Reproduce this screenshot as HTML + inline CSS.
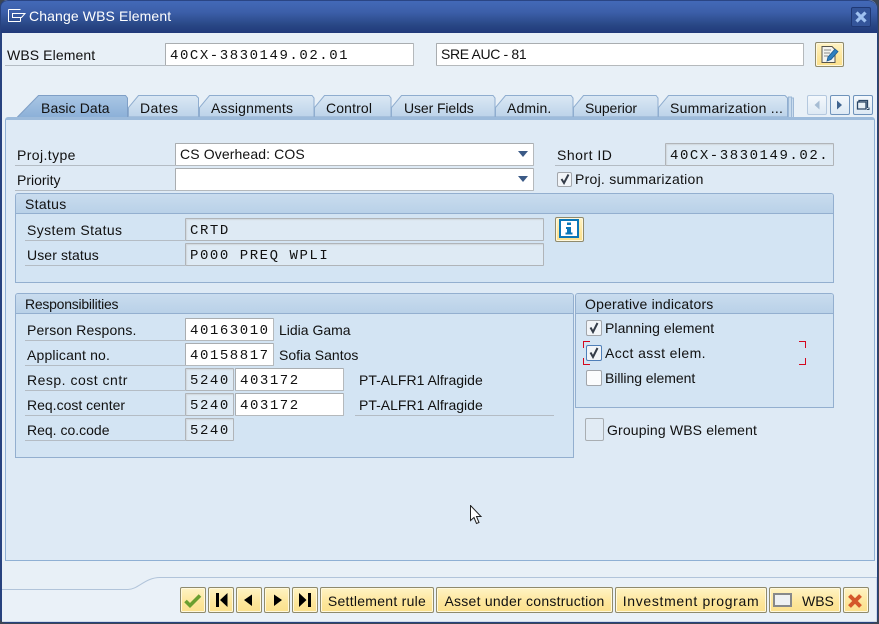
<!DOCTYPE html>
<html><head><meta charset="utf-8">
<style>
html,body{margin:0;padding:0;width:879px;height:624px;overflow:hidden;background:#3c4654}
*{box-sizing:border-box}
body{font-family:"Liberation Sans",sans-serif;font-size:14px;color:#111}
div,span,svg{position:absolute}
#win{left:0;top:0;width:878px;height:623px;background:#e8f0f7;border:1px solid #27427f;border-left-width:2px;border-top:0;border-radius:7px 9px 6px 6px;overflow:hidden}
#tb{left:-2px;top:0;width:880px;height:33px;background:linear-gradient(#4369b8 0,#3c5fa9 35%,#294785 75%,#21397a 100%);border-top:1px solid #2a4584}
.t{white-space:nowrap;line-height:18px;height:18px}
.l{height:23px;border-bottom:1px solid #b4bcc4;white-space:nowrap;line-height:25px;padding-left:2px}
.f{height:23px;background:#fff;border:1px solid #b5b9bc;border-top-color:#a9adb0;border-left-color:#a9adb0;border-radius:1px;white-space:nowrap;line-height:21px;padding-left:4px;color:#111}
.ro{background:#deeaf4;box-shadow:inset 1px 1px 1px #d0d7dd;border-color:#b0b4b8;}
.m{font-family:"Liberation Mono",monospace;font-size:14px;letter-spacing:1.55px;line-height:25px}
.g{background:#d3e4f3;border:1px solid #93afcf;border-radius:3px 3px 0 0}
.gh{left:0;top:0;right:0;height:20px;background:linear-gradient(#c9dcee,#b9d1e8);border-bottom:1px solid #93afcf;border-radius:2px 2px 0 0;line-height:20px;padding-left:9px;white-space:nowrap}
.c{width:16px;height:16px;background:#f2f5f8;border:1px solid #a2a6ab;border-radius:2px}
.b{height:26px;top:587px;background:linear-gradient(#fff3c4,#fde69b 60%,#fbe08c);border:1px solid #8f8a6c;border-radius:2px;box-shadow:inset 0 0 0 1px #fff8dd;line-height:27px;text-align:center;white-space:nowrap;color:#111}
.n{width:20px;height:20px;top:95px;background:linear-gradient(#f4f8fc,#dde9f4);border:1px solid #6f93bb;border-radius:2px}
.r{background:#d4071e}
</style></head><body>
<div id="win" style="">
</div>
<div style="left:0;top:0;width:879px;height:624px">

<div id="tb" style="left:1px;top:0;width:876px;border-radius:7px 9px 0 0"></div>
<svg style="left:8px;top:8px" width="18" height="15" viewBox="0 0 18 15"><path d="M.5 1.500H12.500M.5 1.500V13.500H12.500M12.500 13.500V10M4.500 5.500H17L13.500 9.500H4.500Z" fill="none" stroke="#fff" stroke-width="1"/></svg>
<div class="t" style="left:29px;top:7px;color:#fff;letter-spacing:.12px">Change WBS Element</div>
<div style="left:851px;top:7px;width:20px;height:20px;background:#34559a;border:1px solid #1f3874;border-radius:2px"></div>
<svg style="left:855px;top:11px" width="12" height="12" viewBox="0 0 12 12"><path d="M1.500 1.500L10.500 10.500M10.500 1.500L1.500 10.500" stroke="#9fc1f0" stroke-width="3.200"/></svg>

<div class="l" style="left:5px;top:43px;width:160px;letter-spacing:.1px">WBS Element</div>
<div class="f m" style="left:165px;top:43px;width:249px;">40CX-3830149.02.01</div>
<div class="f" style="left:436px;top:43px;width:368px;letter-spacing:-.35px">SRE AUC - 81</div>
<div class="b" style="left:815px;top:42px;width:29px;height:25px"></div>
<svg style="left:820px;top:45px" width="20" height="19" viewBox="0 0 20 19"><path d="M2 1.500H12L15 4.500V17.500H2Z" fill="#f4f4f0" stroke="#55534c"/><path d="M4 5H11M4 8H10M4 11H8" stroke="#8a8a88"/><path d="M7 16L8 12L15 4L18 6.500L11 14.500Z" fill="#2f80c0" stroke="#1c5a92" stroke-width=".8"/></svg>

<!-- tabs -->
<svg style="left:0;top:90px" width="879" height="32" viewBox="0 0 879 32">
<defs>
<linearGradient id="a" x1="0" y1="0" x2="0" y2="1"><stop offset="0" stop-color="#a9c6e4"/><stop offset="1" stop-color="#8cb0d8"/></linearGradient>
<linearGradient id="i" x1="0" y1="0" x2="0" y2="1"><stop offset="0" stop-color="#dbe8f4"/><stop offset="1" stop-color="#bcd3e9"/></linearGradient>
</defs>
<path d="M788.500 27V7H791.500V27" fill="#c8dbed" stroke="#9db8d6"/>
<path d="M791.500 27V8H793.500V27" fill="#c8dbed" stroke="#9db8d6"/>
<g fill="url(#i)" stroke="#8fadcf">
<path d="M128.500 27V17.500L138.500 5.500H196L198.500 8V27Z"/>
<path d="M199.500 27V17.500L209.500 5.500H312L314 8V27Z"/>
<path d="M314.500 27V17.500L324.500 5.500H389L391 8V27Z"/>
<path d="M391.500 27V17.500L401.500 5.500H493L495 8V27Z"/>
<path d="M495.500 27V17.500L505.500 5.500H571L573 8V27Z"/>
<path d="M573.500 27V17.500L583.500 5.500H656L658 8V27Z"/>
<path d="M658.500 27V17.500L668.500 5.500H785L787.500 8V27Z"/>
</g>
<path d="M17 27.500L38.500 5.500H125.500L127.500 8V27.500Z" fill="url(#a)" stroke="#7f9fc6"/>
</svg>
<div class="t" style="left:41px;top:99px;letter-spacing:.1px">Basic Data</div>
<div class="t" style="left:140px;top:99px;letter-spacing:.35px">Dates</div>
<div class="t" style="left:211px;top:99px;letter-spacing:.18px">Assignments</div>
<div class="t" style="left:326px;top:99px;letter-spacing:.14px">Control</div>
<div class="t" style="left:404px;top:99px;letter-spacing:-.1px">User Fields</div>
<div class="t" style="left:507px;top:99px;letter-spacing:.15px">Admin.</div>
<div class="t" style="left:585px;top:99px;letter-spacing:-.12px">Superior</div>
<div class="t" style="left:670px;top:99px;letter-spacing:.25px">Summarization ...</div>

<div class="n" style="left:807px;border-color:#b4c8de"></div>
<div class="n" style="left:830px"></div>
<div class="n" style="left:853px"></div>
<svg style="left:807px;top:95px" width="66" height="20" viewBox="0 0 66 20"><path d="M12.500 5.500V14.500L7.500 10Z" fill="#a6bcd3"/><path d="M30 5.500V14.500L35 10Z" fill="#40648f"/><path d="M52 7V5.500H60.500V13M52 7H59V14H50.500V7H52" fill="none" stroke="#2a4666" stroke-width="1.300"/><path d="M60 14.500H62V12.500" stroke="#2a4666" fill="none"/></svg>

<!-- main panel -->
<div style="left:5px;top:117px;width:870px;height:444px;background:#deeaf5;border:1px solid #8fb0d4;border-top:3px solid #9dbbdb;border-radius:3px 3px 0 0"></div>

<div class="l" style="left:15px;top:143px;width:160px;letter-spacing:.4px">Proj.type</div>
<div class="f" style="left:175px;top:143px;width:359px;letter-spacing:.12px">CS Overhead: COS</div>
<div class="l" style="left:15px;top:168px;width:160px">Priority</div>
<div class="f" style="left:175px;top:168px;width:359px"></div>
<svg style="left:517px;top:150px" width="13" height="32" viewBox="0 0 13 32"><path d="M1 1H11L6 7Z M1 26H11L6 32Z" fill="#3b5a86"/></svg>
<div class="l" style="left:555px;top:143px;width:110px;letter-spacing:.5px">Short ID</div>
<div class="f ro m" style="left:665px;top:143px;width:169px;overflow:hidden">40CX-3830149.02.</div>
<div class="c" style="left:557px;top:172px;width:15px;height:15px"></div>
<svg style="left:558px;top:172px" width="14" height="14" viewBox="0 0 14 14"><path d="M3.500 7L6 11L10.500 2.500" fill="none" stroke="#343c48" stroke-width="2"/></svg>
<div class="t" style="left:575px;top:170px;letter-spacing:.26px">Proj. summarization</div>

<div class="g" style="left:15px;top:193px;width:819px;height:90px"><div class="gh" style="letter-spacing:.3px">Status</div></div>
<div class="l" style="left:25px;top:218px;width:160px;letter-spacing:.4px">System Status</div>
<div class="f ro m" style="left:185px;top:218px;width:359px">CRTD</div>
<div class="l" style="left:25px;top:243px;width:160px;letter-spacing:.1px">User status</div>
<div class="f ro m" style="left:185px;top:243px;width:359px">P000 PREQ WPLI</div>
<div class="b" style="left:555px;top:217px;width:29px;height:25px"></div>
<svg style="left:559px;top:219px" width="20" height="19" viewBox="0 0 20 19"><rect x="1" y="1" width="18" height="17" fill="#fff" stroke="#0a77b8" stroke-width="2"/><path d="M8 3.500H12V6H8ZM7 8H12V13.500H13.500V15.500H6.500V13.500H8V10H7Z" fill="#0a77b8"/></svg>

<div class="g" style="left:15px;top:293px;width:559px;height:165px"><div class="gh" style="letter-spacing:-.25px">Responsibilities</div></div>
<div class="l" style="left:25px;top:318px;width:160px;letter-spacing:.14px">Person Respons.</div>
<div class="f m" style="left:185px;top:318px;width:89px">40163010</div>
<div class="t" style="left:279px;top:321px">Lidia Gama</div>
<div class="l" style="left:25px;top:343px;width:160px;letter-spacing:.16px">Applicant no.</div>
<div class="f m" style="left:185px;top:343px;width:89px">40158817</div>
<div class="t" style="left:279px;top:346px">Sofia Santos</div>
<div class="l" style="left:25px;top:368px;width:160px;letter-spacing:.5px">Resp. cost cntr</div>
<div class="f ro m" style="left:185px;top:368px;width:49px">5240</div>
<div class="f m" style="left:235px;top:368px;width:109px">403172</div>
<div class="t" style="left:359px;top:371px">PT-ALFR1 Alfragide</div>
<div class="l" style="left:25px;top:393px;width:160px">Req.cost center</div>
<div class="f ro m" style="left:185px;top:393px;width:49px">5240</div>
<div class="f m" style="left:235px;top:393px;width:109px">403172</div>
<div class="l" style="left:355px;top:393px;width:199px;padding-left:4px">PT-ALFR1 Alfragide</div>
<div class="l" style="left:25px;top:418px;width:160px">Req. co.code</div>
<div class="f ro m" style="left:185px;top:418px;width:49px">5240</div>

<div class="g" style="left:575px;top:293px;width:259px;height:115px"><div class="gh" style="letter-spacing:.2px">Operative indicators</div></div>
<div class="c" style="left:586px;top:320px"></div>
<div class="c" style="left:586px;top:345px;border-color:#4f7fb8"></div>
<div class="c" style="left:586px;top:370px;background:#fbfcfd"></div>
<svg style="left:587px;top:320px" width="14" height="42" viewBox="0 0 14 42"><path d="M3.500 7.500L6 12L10.500 3M3.500 32.500L6 37L10.500 28" fill="none" stroke="#343c48" stroke-width="2"/></svg>
<div class="t" style="left:605px;top:319px;letter-spacing:.06px">Planning element</div>
<div class="t" style="left:605px;top:344px;letter-spacing:.4px">Acct asst elem.</div>
<div class="t" style="left:605px;top:369px;letter-spacing:-.06px">Billing element</div>
<div class="r" style="left:583px;top:341px;width:1px;height:7px"></div>
<div class="r" style="left:583px;top:341px;width:7px;height:1px"></div>
<div class="r" style="left:583px;top:358px;width:1px;height:7px"></div>
<div class="r" style="left:583px;top:364px;width:7px;height:1px"></div>
<div class="r" style="left:805px;top:341px;width:1px;height:7px"></div>
<div class="r" style="left:799px;top:341px;width:7px;height:1px"></div>
<div class="r" style="left:805px;top:358px;width:1px;height:7px"></div>
<div class="r" style="left:799px;top:364px;width:7px;height:1px"></div>

<div class="c" style="left:585px;top:418px;width:19px;height:23px;background:#e1ebf4;border-color:#a9aeb2"></div>
<div class="t" style="left:607px;top:421px;letter-spacing:.15px">Grouping WBS element</div>

<!-- footer -->
<svg style="left:2px;top:570px" width="875" height="52" viewBox="0 0 875 52"><path d="M-2 19.500H126C136 19.500 143 7.500 158 7.500H875V52H-2Z" fill="#eaf1f8" stroke="#b1c4da"/></svg>

<div class="b" style="left:180px;width:26px"></div>
<svg style="left:183px;top:592px" width="20" height="17" viewBox="0 0 20 17"><path d="M2.500 9L7 13.500L17 3.500" fill="none" stroke="#6a9f30" stroke-width="3.600"/></svg>
<div class="b" style="left:208px;width:26px"></div>
<div class="b" style="left:236px;width:26px"></div>
<div class="b" style="left:264px;width:26px"></div>
<div class="b" style="left:292px;width:26px"></div>
<svg style="left:208px;top:587px" width="110" height="26" viewBox="0 0 110 26"><path d="M8 6H11V20H8ZM19.500 6V20L12 13Z M44 7.500V19L36 13Z M66 7.500V19L74 13Z M91 6V20L98.500 13Z M100 6H103V20H100Z" fill="#000"/></svg>
<div class="b" style="left:320px;width:114px;letter-spacing:.27px">Settlement rule</div>
<div class="b" style="left:436px;width:177px;letter-spacing:.25px">Asset under construction</div>
<div class="b" style="left:615px;width:152px;letter-spacing:.67px">Investment program</div>
<div class="b" style="left:769px;width:72px;text-align:left;padding-left:32px">WBS</div>
<div style="left:773px;top:593px;width:19px;height:14px;background:#eef1f3;border:2px solid #87898a"></div>
<div class="b" style="left:843px;width:26px"></div>
<svg style="left:846px;top:592px" width="18" height="18" viewBox="0 0 18 18"><path d="M3.500 3.500L14.500 14.500M14.500 3.500L3.500 14.500" stroke="#d4572a" stroke-width="4"/></svg>

<!-- cursor -->
<svg style="left:470px;top:505px" width="13" height="20" viewBox="0 0 13 20"><path d="M.5.500V15.500L4 12.500L6.500 18.500L9 17.500L6.500 11.500H11Z" fill="#fff" stroke="#222"/></svg>
</div>
</body></html>
